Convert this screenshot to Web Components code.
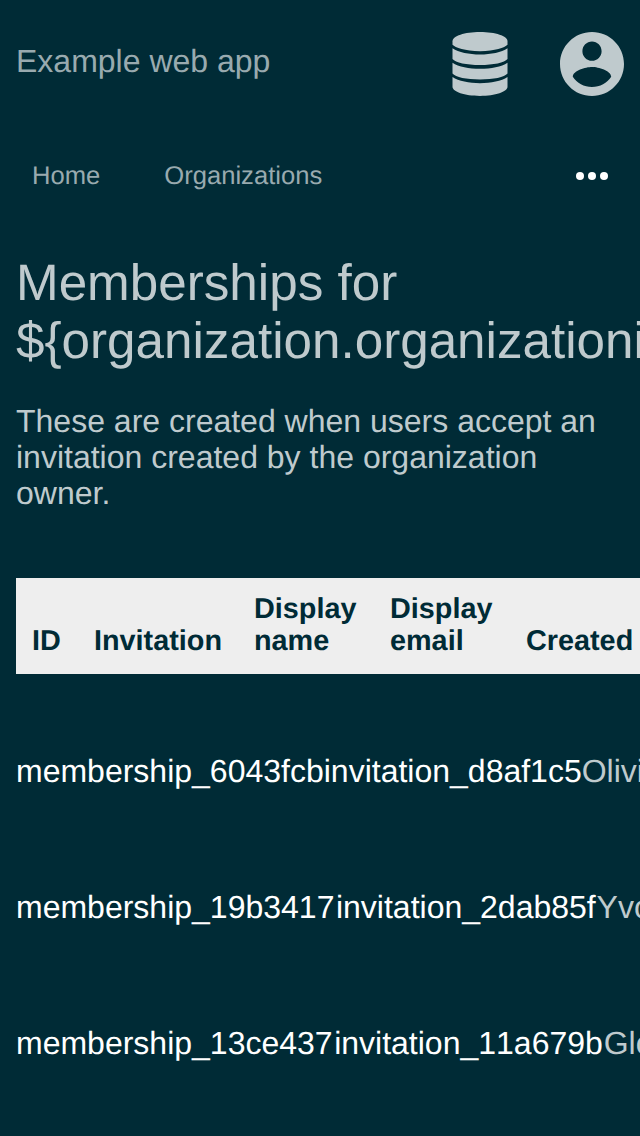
<!DOCTYPE html>
<html lang="en">
<head>
<meta charset="utf-8">
<title>Example web app</title>
<style>
  html, body { margin: 0; height: 100%; overflow: hidden; background: #002b36; }
  body {
    --soft: #bfcacd; --muted: #99aaaf; --ink: #002b36;
    font: 32px/36px "Liberation Sans", Arial, sans-serif;
    color: var(--soft);
    text-rendering: geometricPrecision;
  }
</style>
</head>
<body>
<membership-page></membership-page>
<script>
const define = (name, html) => {
  const template = document.createElement('template');
  template.innerHTML = html;
  customElements.define(name, class extends HTMLElement {
    constructor() {
      super();
      this.attachShadow({ mode: 'open' }).append(template.content.cloneNode(true));
    }
  });
};

define('database-icon', `
  <style>:host{display:block;width:56px;height:64px} svg{display:block}</style>
  <svg width="56" height="64" viewBox="0 0 448 512" fill="currentColor">
    <path d="M444 73.1v29.200C422 126 344 153 224 153S26 126 4 102.300V73.100C4 32.800 100.300 0 224 0s220 32.800 220 73.100z"/>
    <path d="M4 129C52 162 136 179 224 179s172-17 220-50v87c-24 31-112 48-220 48S28 247 4 216z"/>
    <path d="M4 245C52 278 136 294 224 294s172-16 220-49v87c-24 31-112 47-220 47S28 363 4 332z"/>
    <path d="M4 360C52 393 136 409 224 409s172-16 220-49v78.900C444 479.200 347.700 512 224 512S4 479.200 4 438.900z"/>
  </svg>`);

define('account-icon', `
  <style>:host{display:block;width:64px;height:64px} svg{display:block}</style>
  <svg width="64" height="64" viewBox="2 2 20 20" fill="currentColor">
    <path d="M12 2C6.480 2 2 6.480 2 12s4.480 10 10 10 10-4.480 10-10S17.520 2 12 2zm0 3c1.660 0 3 1.340 3 3s-1.340 3-3 3-3-1.340-3-3 1.340-3 3-3zm0 14.200c-2.500 0-4.710-1.280-6-3.220.030-1.990 4-3.080 6-3.080 1.990 0 5.970 1.090 6 3.080-1.290 1.940-3.500 3.220-6 3.220z"/>
  </svg>`);

define('app-header', `
  <style>
    :host{display:flex;align-items:center;height:128px;padding:0 16px;box-sizing:border-box}
    .brand{flex:1;color:var(--muted);padding-bottom:6px}
    .icons{display:flex;gap:52px}
  </style>
  <div class="brand"><slot></slot></div>
  <div class="icons"><database-icon></database-icon><account-icon></account-icon></div>`);

define('nav-item', `
  <style>:host{display:block;padding:0 32px;font-size:25.6px;line-height:30px;color:var(--muted)}</style>
  <slot></slot>`);

define('nav-bar', `
  <style>
    :host{display:flex;align-items:center;height:96px}
    svg{display:block;margin:0 32px 0 auto}
  </style>
  <slot></slot>
  <svg width="32" height="8" fill="#fff"><circle cx="4" cy="4" r="4"/><circle cx="16" cy="4" r="4"/><circle cx="28" cy="4" r="4"/></svg>`);

define('page-intro', `
  <style>
    :host{display:block;padding:30px 16px 0}
    h1{margin:0;font-size:51.2px;line-height:58px;font-weight:400}
    p{margin:33px 0 0}
  </style>
  <h1><slot name="title"></slot></h1>
  <p><slot></slot></p>`);

define('table-head', `
  <style>
    :host{display:grid;grid-template-columns:62px 160px 136px 136px 200px;align-items:end;
      width:694px;height:96px;padding-bottom:17px;box-sizing:border-box;
      background:#eee;color:var(--ink);font-size:28.8px;line-height:32px;font-weight:700}
    ::slotted(*){padding:0 16px}
  </style>
  <slot></slot>`);

define('table-row', `
  <style>
    :host{display:flex;align-items:center;height:136px;white-space:nowrap;font-kerning:none}
    :host([spaced]) ::slotted(a + a){margin:0 .9px 0 1.500px}
    :host([spaced]) ::slotted(a:nth-child(2)){margin:0 .9px 0 1.500px}
    ::slotted(a){color:#fff}
  </style>
  <slot></slot>`);

define('membership-table', `
  <style>:host{display:block;margin:67px 0 0 16px} .rows{padding-top:29px}</style>
  <slot name="head"></slot>
  <div class="rows"><slot></slot></div>`);

define('membership-page', `
  <style>:host{display:block;height:100%;overflow:hidden}</style>
  <app-header>Example web app</app-header>
  <nav-bar><nav-item>Home</nav-item><nav-item>Organizations</nav-item></nav-bar>
  <page-intro>
    <span slot="title">Memberships for \${organization.organizationid}</span>
    These are created when users accept an invitation created by the organization owner.
  </page-intro>
  <membership-table>
    <table-head slot="head"><span>ID</span><span>Invitation</span><span>Display name</span><span>Display email</span><span>Created</span></table-head>
    <table-row><a>membership_6043fcb</a><a>invitation_d8af1c5</a><span>Olivia</span></table-row>
    <table-row spaced><a>membership_19b3417</a><a>invitation_2dab85f</a><span>Yvonne</span></table-row>
    <table-row spaced><a>membership_13ce437</a><a>invitation_11a679b</a><span>Gloria</span></table-row>
  </membership-table>`);
</script>
</body>
</html>
